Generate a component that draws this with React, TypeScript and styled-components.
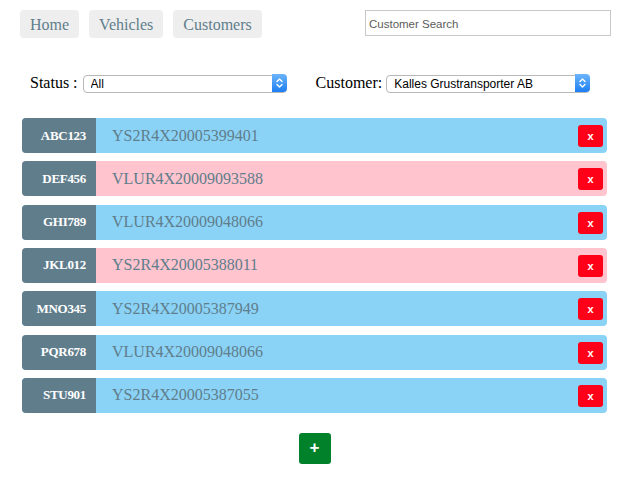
import React from "react";
import styled, { createGlobalStyle } from "styled-components";

const GlobalStyle = createGlobalStyle`
  html, body { margin: 0; padding: 0; background: #fff; }
  body { font-family: "Liberation Serif", "Times New Roman", serif; }
  * { box-sizing: border-box; }
`;

const Page = styled.div`
  width: 625px;
  display: flex;
  flex-direction: column;
`;

const Header = styled.header`
  display: flex;
  justify-content: space-between;
  align-items: flex-start;
  padding: 10px 14px 0 20px;
`;

const Nav = styled.nav`
  display: flex;
  gap: 10px;
`;

const NavButton = styled.button`
  height: 28px;
  padding: 1px 10px 0;
  border: none;
  border-radius: 4px;
  background: #eeeeee;
  color: #5f7e8c;
  font-family: "Liberation Serif", "Times New Roman", serif;
  font-size: 16px;
  cursor: pointer;
`;

const Search = styled.input`
  width: 246px;
  height: 26px;
  border: 1px solid #c8c8c8;
  padding: 2px 3px 0;
  font-family: "Liberation Sans", Arial, sans-serif;
  font-size: 11.5px;
  color: #333;
  outline: none;
  &::placeholder { color: #5c5c5c; }
`;

const Filters = styled.div`
  display: flex;
  align-items: center;
  height: 18px;
  margin: 36px 0 0 30px;
`;

const FilterGroup = styled.label<{ $offset?: number }>`
  display: flex;
  align-items: center;
  margin-left: ${(p) => p.$offset ?? 0}px;
  font-size: 16px;
  color: #000;
`;

const LabelText = styled.span<{ $gap: number }>`
  margin-right: ${(p) => p.$gap}px;
`;

const SelectWrap = styled.span`
  position: relative;
  display: inline-block;
  width: 204px;
  height: 18px;
`;

const Select = styled.select`
  appearance: none;
  -webkit-appearance: none;
  width: 100%;
  height: 100%;
  border: 1px solid #b8b8b8;
  border-radius: 4px;
  background: #fff;
  padding: 0 18px 0 7px;
  font-family: "Liberation Sans", Arial, sans-serif;
  font-size: 12px;
  color: #000;
  outline: none;
`;

const Arrow = styled.span`
  position: absolute;
  right: 0;
  top: 0;
  width: 15px;
  height: 18px;
  border-radius: 0 4px 4px 0;
  background: linear-gradient(#6db5fb, #1c7ef2);
  display: flex;
  align-items: center;
  justify-content: center;
  pointer-events: none;
`;

const List = styled.div`
  display: flex;
  flex-direction: column;
  gap: 8.33px;
  padding: 26px 18px 0 22px;
`;

const Row = styled.div<{ $tone: "blue" | "pink" }>`
  display: flex;
  align-items: center;
  height: 35px;
  border-radius: 4px;
  overflow: hidden;
  background: ${(p) => (p.$tone === "blue" ? "#8ad3f7" : "#ffc4ce")};
`;

const Plate = styled.div`
  width: 74px;
  height: 100%;
  flex: none;
  display: flex;
  align-items: center;
  justify-content: flex-end;
  padding-right: 10px;
  background: #607d8b;
  color: #fff;
  font-weight: bold;
  font-size: 13px;
  letter-spacing: -0.3px;
`;

const Vin = styled.div`
  flex: 1;
  padding-left: 16px;
  font-size: 16px;
  color: #607d8b;
`;

const DeleteButton = styled.button`
  width: 25px;
  height: 22px;
  margin: 1px 4px 0 0;
  border: none;
  border-radius: 3px;
  background: #ff0019;
  color: #fff;
  font-family: "Liberation Sans", Arial, sans-serif;
  font-weight: bold;
  font-size: 11px;
  padding: 0;
  cursor: pointer;
`;

const AddRow = styled.div`
  display: flex;
  justify-content: center;
  padding: 20px 18px 0 22px;
`;

const AddButton = styled.button`
  width: 32px;
  height: 31px;
  border: none;
  border-radius: 3px;
  background: #02812b;
  color: #fff;
  font-family: "Liberation Sans", Arial, sans-serif;
  font-weight: bold;
  font-size: 17px;
  padding: 0;
  cursor: pointer;
`;

const Chevrons = () => (
  <svg width="9" height="12" viewBox="0 0 9 12" fill="none" stroke="#fff" strokeWidth="1.4" strokeLinecap="round" strokeLinejoin="round">
    <polyline points="2,4.5 4.5,2 7,4.5" />
    <polyline points="2,7.5 4.5,10 7,7.5" />
  </svg>
);

const vehicles: { plate: string; vin: string; tone: "blue" | "pink" }[] = [
  { plate: "ABC123", vin: "YS2R4X20005399401", tone: "blue" },
  { plate: "DEF456", vin: "VLUR4X20009093588", tone: "pink" },
  { plate: "GHI789", vin: "VLUR4X20009048066", tone: "blue" },
  { plate: "JKL012", vin: "YS2R4X20005388011", tone: "pink" },
  { plate: "MNO345", vin: "YS2R4X20005387949", tone: "blue" },
  { plate: "PQR678", vin: "VLUR4X20009048066", tone: "blue" },
  { plate: "STU901", vin: "YS2R4X20005387055", tone: "blue" },
];

export default function App() {
  return (
    <>
      <GlobalStyle />
      <Page>
        <Header>
          <Nav>
            <NavButton>Home</NavButton>
            <NavButton>Vehicles</NavButton>
            <NavButton>Customers</NavButton>
          </Nav>
          <Search placeholder="Customer Search" />
        </Header>
        <Filters>
          <FilterGroup>
            <LabelText $gap={5}>Status :</LabelText>
            <SelectWrap>
              <Select defaultValue="all">
                <option value="all">All</option>
              </Select>
              <Arrow><Chevrons /></Arrow>
            </SelectWrap>
          </FilterGroup>
          <FilterGroup $offset={29}>
            <LabelText $gap={4}>Customer:</LabelText>
            <SelectWrap>
              <Select defaultValue="kalles">
                <option value="kalles">Kalles Grustransporter AB</option>
              </Select>
              <Arrow><Chevrons /></Arrow>
            </SelectWrap>
          </FilterGroup>
        </Filters>
        <List>
          {vehicles.map((v) => (
            <Row key={v.plate} $tone={v.tone}>
              <Plate>{v.plate}</Plate>
              <Vin>{v.vin}</Vin>
              <DeleteButton>x</DeleteButton>
            </Row>
          ))}
        </List>
        <AddRow>
          <AddButton>+</AddButton>
        </AddRow>
      </Page>
    </>
  );
}
